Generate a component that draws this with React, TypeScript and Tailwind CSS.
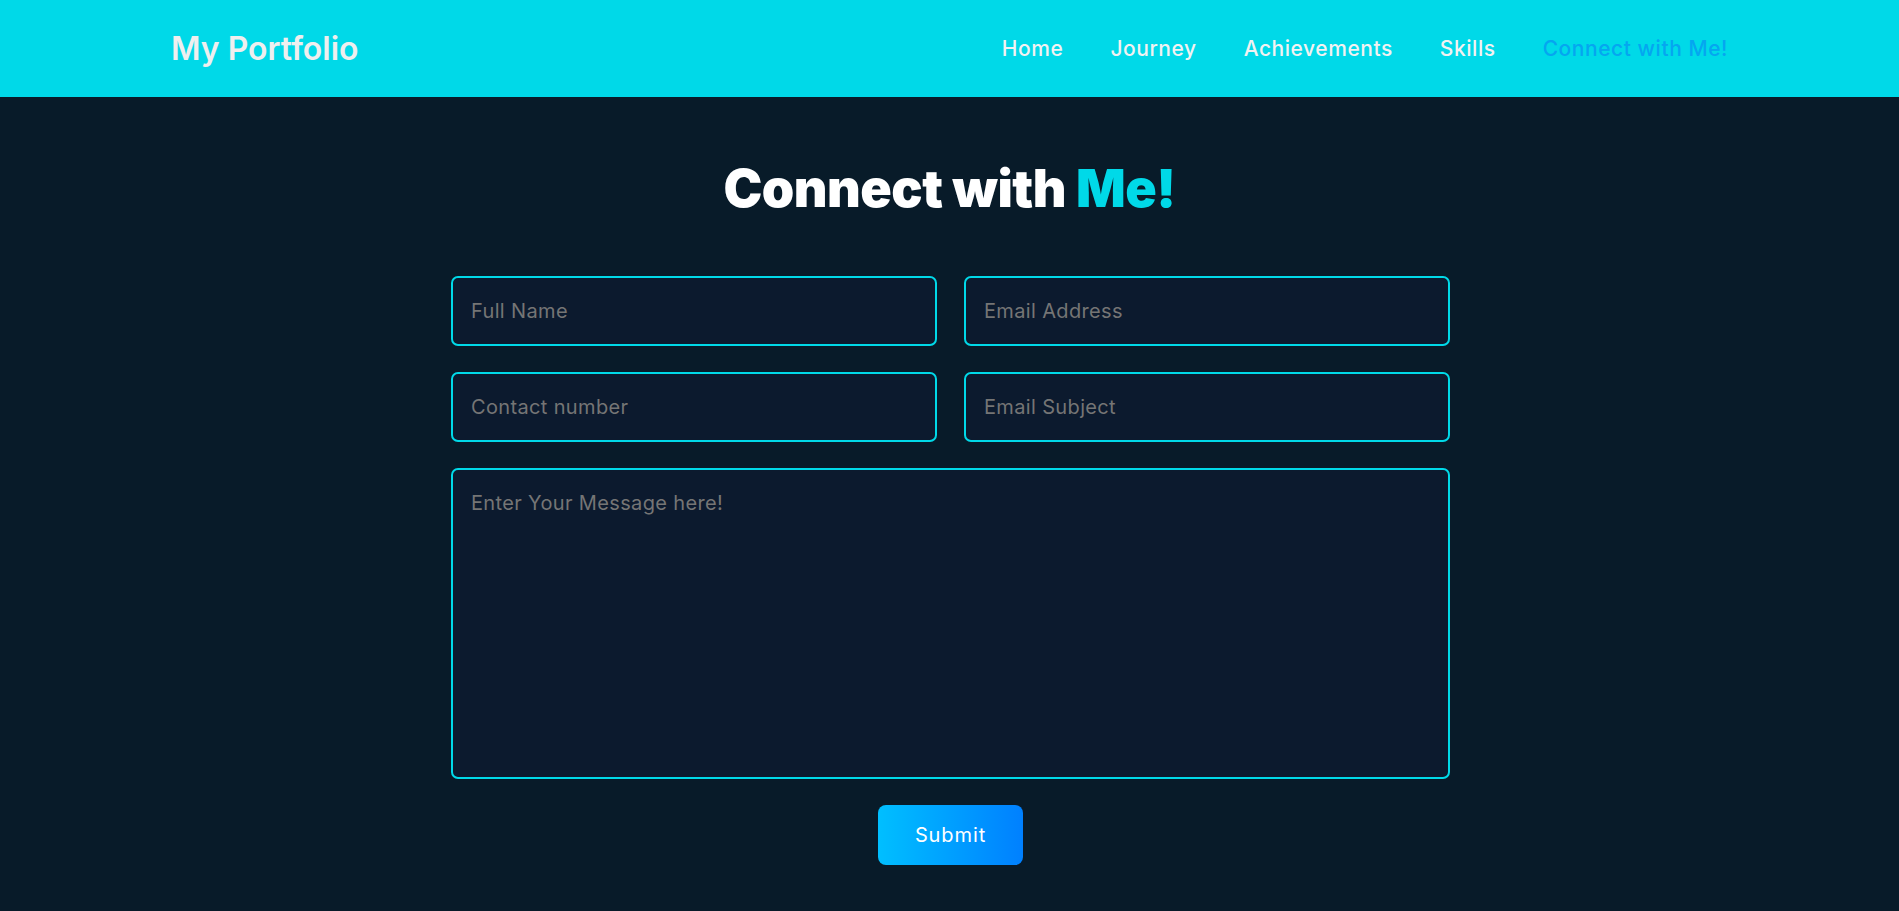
import React from "react";

const field =
  "h-[70px] rounded-[7px] border-2 border-[#00d9e8] bg-[#0c1a2e] px-[18px] text-[20px] tracking-[0.35px] text-white placeholder:text-[#757575] outline-none";

export default function App() {
  const links = ["Home", "Journey", "Achievements", "Skills"];
  return (
    <div className="min-h-screen bg-[#081b29] font-['Inter',sans-serif]">
      <header className="h-[97px] bg-[#00d9e8] flex items-center justify-between px-[171px]">
        <span className="text-[32px] font-semibold text-[#efefef] leading-none">My Portfolio</span>
        <nav className="flex items-center gap-[47px] text-[21px] font-medium leading-none tracking-[0.55px]">
          {links.map((l) => (
            <a key={l} className="text-[#f2f2f2]">{l}</a>
          ))}
          <a className="text-[#05a6f0]">Connect with Me!</a>
        </nav>
      </header>
      <section className="flex flex-col items-center pb-[40px]">
        <h2 className="mt-[66px] text-[52px] leading-none font-black text-white tracking-[-0.5px]">
          Connect with <span className="text-[#00d9e8]">Me!</span>
        </h2>
        <form className="mt-[61px] w-[999px] ml-[2px] flex flex-col items-center">
          <div className="w-full grid grid-cols-2 gap-x-[27px] gap-y-[26px]">
            <input placeholder="Full Name" className={field} />
            <input placeholder="Email Address" className={field} />
            <input placeholder="Contact number" className={field} />
            <input placeholder="Email Subject" className={field} />
            <textarea
              placeholder="Enter Your Message here!"
              className="col-span-2 h-[311px] resize-none rounded-[7px] border-2 border-[#00d9e8] bg-[#0c1a2e] px-[18px] py-[18px] text-[20px] tracking-[0.35px] text-white placeholder:text-[#757575] outline-none"
            />
          </div>
          <button
            type="button"
            className="mt-[26px] w-[145px] h-[60px] rounded-[8px] bg-[linear-gradient(to_right,#00bfff,#0080ff)] text-white text-[20px] font-normal tracking-[0.9px]"
          >
            Submit
          </button>
        </form>
      </section>
    </div>
  );
}
